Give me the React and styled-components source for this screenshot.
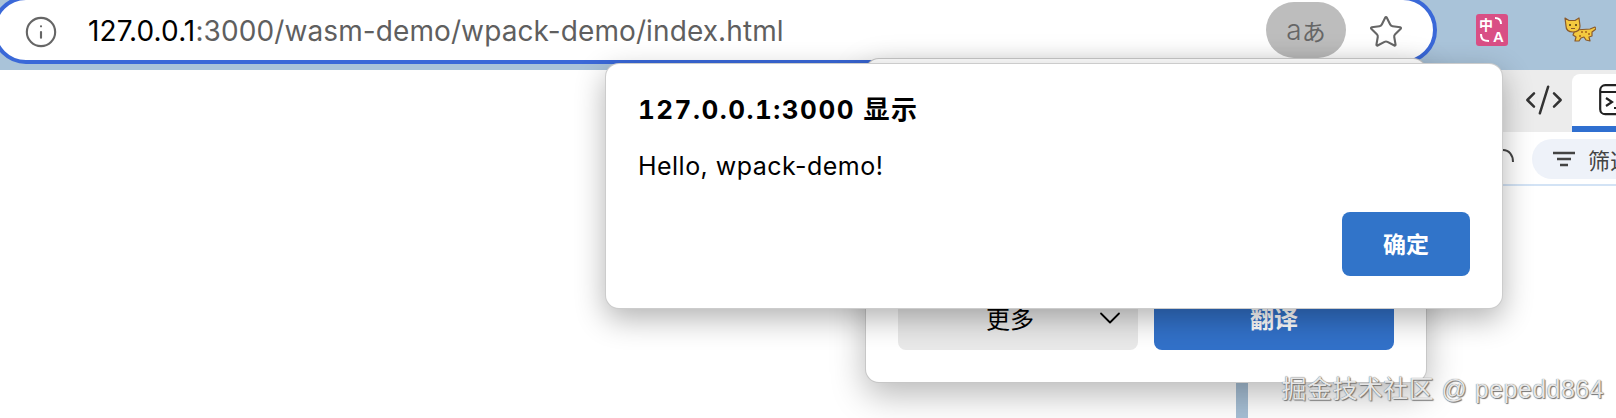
import React from "react";
import styled, { createGlobalStyle } from "styled-components";
import { ChevronDown, Star, Info, CodeXml } from "lucide-react";

const sans = `Inter, "Liberation Sans", "Noto Sans CJK SC", sans-serif`;

const Global = createGlobalStyle`
  html, body { margin: 0; padding: 0; background: #fff; }
  body { font-family: ${sans}; }
`;

const Page = styled.div`
  position: relative;
  width: 1616px;
  height: 418px;
  overflow: hidden;
  display: flex;
  flex-direction: column;
`;

const Toolbar = styled.div`
  height: 70px;
  flex: none;
  display: flex;
  align-items: flex-start;
  background: #a9c3d9;
`;

const Omnibox = styled.div`
  flex: none;
  box-sizing: border-box;
  width: 1445px;
  height: 68px;
  margin: -4px 0 0 -8px;
  padding: 4px 29px 0 28px;
  display: flex;
  align-items: center;
  background: #fff;
  border: 4px solid #3a68d8;
  border-radius: 34px;
  color: #666;
`;

const Url = styled.div`
  margin: -2px 0 0 30px;
  font-size: 28px;
  letter-spacing: 0.1px;
  color: #5f5f5f;
  white-space: nowrap;
  flex: 1;
  b {
    font-weight: 400;
    color: #000;
  }
`;

const TranslatePill = styled.div`
  width: 80px;
  height: 56px;
  margin-top: -4px;
  margin-right: 22px;
  border-radius: 28px;
  background: #bdbdbd;
  color: #666;
  font: 400 24px Inter, "Noto Sans CJK JP", sans-serif;
  display: flex;
  align-items: center;
  justify-content: center;
`;

const LatinA = styled.span`
  font-size: 28px;
  font-weight: 300;
  line-height: 1;
`;

const Extensions = styled.div`
  display: flex;
  align-items: center;
  gap: 56px;
  margin: 14px 0 0 39px;
`;

const PinkBadge = styled.svg`
  display: block;
  width: 32px;
  height: 32px;
`;

const Body = styled.div`
  flex: 1;
  display: flex;
`;

const Content = styled.div`
  flex: 1;
  background: #fff;
`;

const Splitter = styled.div`
  flex: none;
  width: 12px;
  background: #a6bfd5;
`;

const DevTools = styled.div`
  flex: none;
  width: 368px;
  background: #fff;
`;

const TabBar = styled.div`
  height: 62px;
  box-sizing: border-box;
  padding-top: 4px;
  display: flex;
  justify-content: flex-end;
  background: #ececec;
`;

const Tab = styled.div`
  box-sizing: border-box;
  width: ${(p) => p.$w}px;
  padding-left: ${(p) => p.$pad}px;
  display: flex;
  align-items: center;
  color: #333;
  overflow: hidden;
  background: ${(p) => (p.$active ? "#fff" : "transparent")};
  border-radius: 8px 0 0 0;
  border-bottom: 6px solid ${(p) => (p.$active ? "#2f6fd0" : "transparent")};
`;

const FilterRow = styled.div`
  height: 54px;
  box-sizing: border-box;
  padding: 6px 0 5px 242px;
  display: flex;
  align-items: center;
  gap: 18px;
  border-bottom: 2px solid #d3e3f5;
`;

const FilterPill = styled.div`
  flex: none;
  width: 84px;
  height: 40px;
  display: flex;
  align-items: center;
  gap: 13px;
  padding-left: 21px;
  box-sizing: border-box;
  border-radius: 20px 0 0 20px;
  background: #eef2f9;
  color: #444;
  font-size: 22px;
  white-space: nowrap;
  overflow: hidden;
`;

const Popup = styled.div`
  position: absolute;
  left: 865px;
  top: 58px;
  width: 562px;
  height: 325px;
  box-sizing: border-box;
  padding: 0 32px 32px;
  display: flex;
  align-items: flex-end;
  gap: 16px;
  background: #fff;
  border-radius: 14px;
  border: 1px solid rgba(0, 0, 0, 0.22);
  box-shadow: 0 12px 34px rgba(0, 0, 0, 0.28);
`;

const MoreSelect = styled.div`
  flex: none;
  width: 240px;
  height: 60px;
  padding: 0 10px 5px 0;
  box-sizing: border-box;
  display: flex;
  align-items: center;
  justify-content: flex-end;
  gap: 58px;
  border-radius: 8px;
  background: #e9e9e9;
  color: #000;
  font-size: 24px;
`;

const TranslateButton = styled.div`
  flex: none;
  width: 240px;
  height: 60px;
  padding-bottom: 5px;
  box-sizing: border-box;
  display: flex;
  align-items: center;
  justify-content: center;
  border-radius: 8px;
  background: #3271c9;
  color: #fff;
  font-size: 24px;
  font-weight: 700;
`;

const Dialog = styled.div`
  position: absolute;
  left: 605px;
  top: 63px;
  width: 898px;
  height: 246px;
  box-sizing: border-box;
  padding: 31px 32px 32px 32px;
  display: flex;
  flex-direction: column;
  background: #fff;
  border-radius: 14px;
  border: 1px solid rgba(0, 0, 0, 0.2);
  box-shadow: 0 10px 30px rgba(0, 0, 0, 0.3);
`;

const DialogTitle = styled.div`
  font-size: 26px;
  line-height: 30px;
  font-weight: 700;
  letter-spacing: 1.5px;
  font-variant-numeric: tabular-nums;
  color: #000;
`;

const DialogMessage = styled.div`
  margin-top: 27px;
  font-size: 25px;
  line-height: 28px;
  letter-spacing: 0.47px;
  color: #000;
`;

const DialogActions = styled.div`
  margin-top: auto;
  display: flex;
  justify-content: flex-end;
`;

const ConfirmButton = styled.div`
  width: 128px;
  height: 64px;
  padding-bottom: 3px;
  box-sizing: border-box;
  display: flex;
  align-items: center;
  justify-content: center;
  border-radius: 8px;
  background: #3174c9;
  color: #fff;
  font-size: 23px;
  font-weight: 700;
`;

const Watermark = styled.div`
  position: absolute;
  right: 12px;
  bottom: 14px;
  font-family: "Liberation Sans", "Noto Sans CJK SC", sans-serif;
  font-size: 25px;
  line-height: 30px;
  letter-spacing: 0.45px;
  color: #e6e6e6;
  text-shadow: 0 0 1px #555, 1px 1px 1px #777;
  white-space: nowrap;
`;

const Cat = () => (
  <svg width="32" height="26" viewBox="0 0 32 26">
    <path
      d="M11 13l15-1 5-2 1 2-4 3 0 4-3 1 1 4-4-1-2-3-3 1-2 3-4 0 1-4-3-2z"
      fill="#f4c93f"
      stroke="#8a5a2c"
      strokeWidth="1.2"
      strokeLinejoin="round"
    />
    <path
      d="M1 1l4 2.5h6L15 1l1 8c0 4-3 6-7 6s-7-2-7-6z"
      fill="#f4c93f"
      stroke="#8a5a2c"
      strokeWidth="1.2"
      strokeLinejoin="round"
    />
    <circle cx="6" cy="8" r="1" fill="#4a3414" />
    <circle cx="12" cy="8" r="1" fill="#4a3414" />
    <path d="M7 11.5h4" stroke="#8a5a2c" strokeWidth="1" />
    <circle cx="18" cy="15" r="1" fill="#a8641c" />
    <circle cx="22" cy="15" r="1" fill="#a8641c" />
    <circle cx="25" cy="17" r="1" fill="#a8641c" />
    <circle cx="16" cy="19" r="1" fill="#a8641c" />
  </svg>
);

const FilterIcon = () => (
  <svg width="22" height="16" viewBox="0 0 22 16" fill="none" stroke="#444" strokeWidth="2.4" style={{ flex: "none" }}>
    <path d="M0 2h22M4 8h14M7 14h8" />
  </svg>
);

const PartialIcon = () => (
  <svg width="24" height="24" viewBox="0 0 24 24" fill="none" stroke="#444" strokeWidth="2" style={{ flex: "none" }}>
    <path d="M13 3c6 0 10 5 10 12" />
  </svg>
);

const ConsoleIcon = () => (
  <svg width="36" height="32" viewBox="0 0 36 32" fill="none" stroke="#222" strokeWidth="2.2" style={{ flex: "none" }}>
    <rect x="1.2" y="1.2" width="33" height="29" rx="5" />
    <path d="M1.2 8h33M7 14l6 4-6 4M15 24h10" />
  </svg>
);

export default function App() {
  return (
    <Page>
      <Global />
      <Toolbar>
        <Omnibox>
          <Info size={34} strokeWidth={1.5} />
          <Url>
            <b>127.0.0.1</b>:3000/wasm-demo/wpack-demo/index.html
          </Url>
          <TranslatePill>
            <LatinA>a</LatinA>あ
          </TranslatePill>
          <Star size={36} strokeWidth={1.4} />
        </Omnibox>
        <Extensions>
          <PinkBadge viewBox="0 0 32 32">
            <rect width="32" height="32" rx="3" fill="#d94f85" />
            <text x="3" y="16" fontSize="14" fontWeight="700" fill="#fff" fontFamily="Noto Sans CJK SC">中</text>
            <text x="17" y="28" fontSize="15" fontWeight="700" fill="#fff" fontFamily="Liberation Sans">A</text>
            <path d="M5 20c0 6 3 7 8 7M19 4c4 0 6 2 6 6" fill="none" stroke="#fff" strokeWidth="2" />
          </PinkBadge>
          <Cat />
        </Extensions>
      </Toolbar>
      <Body>
        <Content />
        <Splitter />
        <DevTools>
          <TabBar>
            <Tab $w={50} $pad={2}>
              <CodeXml size={40} strokeWidth={1.5} />
            </Tab>
            <Tab $w={44} $pad={27} $active>
              <ConsoleIcon />
            </Tab>
          </TabBar>
          <FilterRow>
            <PartialIcon />
            <FilterPill>
              <FilterIcon />
              筛选器
            </FilterPill>
          </FilterRow>
        </DevTools>
      </Body>
      <Popup>
        <MoreSelect>
          更多
          <ChevronDown size={36} strokeWidth={1.2} />
        </MoreSelect>
        <TranslateButton>翻译</TranslateButton>
      </Popup>
      <Dialog>
        <DialogTitle>127.0.0.1:3000 显示</DialogTitle>
        <DialogMessage>Hello, wpack-demo!</DialogMessage>
        <DialogActions>
          <ConfirmButton>确定</ConfirmButton>
        </DialogActions>
      </Dialog>
      <Watermark>掘金技术社区 @ pepedd864</Watermark>
    </Page>
  );
}
